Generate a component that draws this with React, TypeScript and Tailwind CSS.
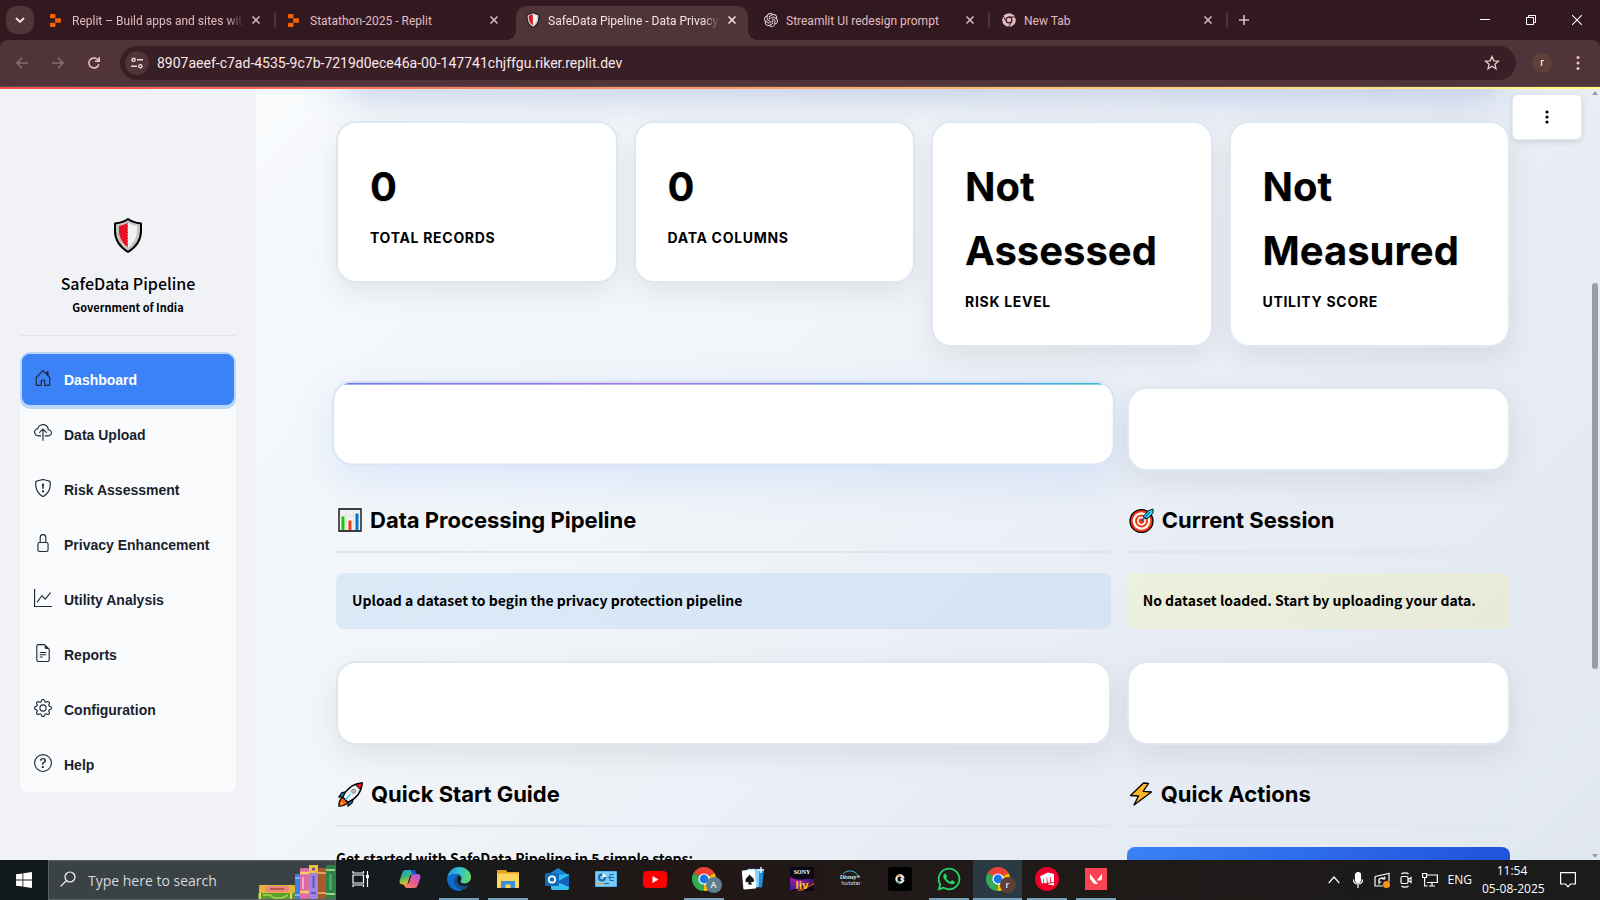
import type { ReactNode } from "react";
import {
  BsHouseDoor,
  BsCloudUpload,
  BsShieldExclamation,
  BsLock,
  BsGraphUp,
  BsFileEarmarkText,
  BsGear,
  BsQuestionCircle,
} from "react-icons/bs";
import { SiOpenai, SiRiotgames, SiValorant } from "react-icons/si";
import { FaWhatsapp } from "react-icons/fa";

const ui = "font-['Segoe_UI','Open_Sans','Noto_Sans',sans-serif]";
const chrome = "font-['Segoe_UI','Roboto',sans-serif]";
const source = "font-['Noto_Sans_CJK_SC','Open_Sans',sans-serif] font-bold";
const inter = "font-['Inter',sans-serif]";

/* ---------- small drawings ---------- */

function Shield({ className }: { className: string }) {
  return (
    <svg viewBox="0 0 28 35" className={className} aria-hidden="true">
      <path d="M14 1C10 4 5 5 1 5.5V13c0 9 5 16 13 21 8-5 13-12 13-21V5.500C23 5 18 4 14 1Z" fill="#c6c6c6" stroke="#000" strokeWidth="2" strokeLinejoin="round" />
      <path d="M14 5C11 6 8 7.500 5 7.800V13c0 7 4 12.500 9 16.500Z" fill="#e81224" />
      <path d="M14 5c3 1 6 2.500 9 2.800V13c0 7-4 12.500-9 16.500Z" fill="#f2f2f2" />
      <path d="M14.500 6v23" stroke="#f2f2f2" strokeWidth="2" strokeDasharray="1.500 1.500" />
    </svg>
  );
}

function Replit() {
  return (
    <svg viewBox="0 0 12 14" className="h-[13px] w-[11px]" fill="#f26207" aria-hidden="true">
      <rect x="0" y="0" width="6" height="4.600" rx="1" />
      <rect x="5.500" y="4.600" width="6.500" height="4.800" rx="1" />
      <rect x="0" y="9.400" width="6" height="4.600" rx="1" />
    </svg>
  );
}

function ChromeMono() {
  return (
    <svg viewBox="0 0 16 16" className="size-3.5" aria-hidden="true">
      <circle cx="8" cy="8" r="7.800" fill="#e3b9c3" />
      <circle cx="8" cy="8" r="4" fill="#31191f" />
      <circle cx="8" cy="8" r="2.700" fill="#e3b9c3" />
      <path d="M8 4.600h7.200M5 9.700 1.500 3.600M11 9.800 7.600 15.700" stroke="#31191f" strokeWidth="1.100" />
    </svg>
  );
}

function ChromeColor({ letter, badge }: { letter: string; badge: string }) {
  return (
    <span className="relative">
      <svg viewBox="0 0 24 24" className="size-6" aria-hidden="true">
        <path d="M12 12 1.600 6A12 12 0 0 1 22.400 6Z" fill="#ea4335" />
        <path d="M12 12 22.400 6A12 12 0 0 1 12 24Z" fill="#fbbc05" />
        <path d="M12 12v12A12 12 0 0 1 1.600 6Z" fill="#34a853" />
        <path d="M12 6h10.400L12 12Z" fill="#ea4335" />
        <path d="M17.200 15 12 24V12Z" fill="#fbbc05" />
        <path d="M6.800 15 1.600 6 12 12Z" fill="#34a853" />
        <circle cx="12" cy="12" r="5.600" fill="#fff" />
        <circle cx="12" cy="12" r="4.400" fill="#1a73e8" />
      </svg>
      <span className={`absolute -right-1.5 -bottom-0.5 flex size-4 items-center justify-center rounded-full text-[9px] font-semibold text-[#e6eaec] ${badge}`}>
        {letter}
      </span>
    </span>
  );
}

function Cross({ className = "" }: { className?: string }) {
  return (
    <svg viewBox="0 0 8 8" className={`size-2 ${className}`} aria-hidden="true">
      <path d="m.5.5 7 7m0-7-7 7" stroke="currentColor" strokeWidth="1.500" fill="none" />
    </svg>
  );
}

/* ---------- browser frame ---------- */

type TabInfo = { title: string; icon: ReactNode; active?: boolean; divider?: boolean; fade?: boolean };

const tabs: TabInfo[] = [
  { title: "Replit – Build apps and sites with AI", icon: <Replit />, divider: true, fade: true },
  { title: "Statathon-2025 - Replit", icon: <Replit /> },
  { title: "SafeData Pipeline - Data Privacy", icon: <Shield className="h-4 w-3.5" />, active: true, fade: true },
  { title: "Streamlit UI redesign prompt", icon: <SiOpenai className="size-3.5 text-[#e9dcdf]" />, divider: true },
  { title: "New Tab", icon: <ChromeMono />, divider: true },
];

function BrowserTab({ title, icon, active, divider, fade }: TabInfo) {
  return (
    <div className="relative flex h-full w-[238px] min-w-0 items-end">
      {active && (
        <div className="absolute top-1.5 -right-1.5 bottom-0 -left-2 flex items-end">
          <span className="size-2.5 bg-[radial-gradient(circle_at_0_0,#31191f_10px,#50343a_10px)]" />
          <span className="h-full flex-1 rounded-t-[10px] bg-[#50343a]" />
          <span className="size-2.5 bg-[radial-gradient(circle_at_100%_0,#31191f_10px,#50343a_10px)]" />
        </div>
      )}
      <div className="relative flex h-full w-full items-center pl-3">
        <button className="flex min-w-0 flex-1 items-center text-left">
          <span className="flex w-[22px] shrink-0 items-center">{icon}</span>
          <span
            className={`mt-0.5 flex-1 overflow-hidden whitespace-nowrap text-[12px] leading-4 ${active ? "text-[#f3e3e7]" : "text-[#e3b9c3]"} ${fade ? "[mask-image:linear-gradient(90deg,#000_90%,transparent)]" : ""}`}
          >
            {title}
          </span>
        </button>
        <button aria-label={`Close ${title}`} className={`mr-2 flex w-6 items-center justify-center ${active ? "text-[#f3e3e7]" : "text-[#e3b9c3]"}`}>
          <Cross />
        </button>
      </div>
      {divider && <span className="absolute top-3 right-0 h-4 w-0.5 rounded bg-[#50343a]" />}
    </div>
  );
}

function TabStrip() {
  return (
    <div className={`flex h-10 items-center bg-[#31191f] ${chrome}`}>
      <button aria-label="Search tabs" className="mr-1 ml-1.5 flex size-7 items-center justify-center rounded-[10px] bg-[#50343a]">
        <svg viewBox="0 0 10 6" className="h-1.5 w-2.5" aria-hidden="true">
          <path d="m1 1 4 4 4-4" stroke="#f3e3e7" strokeWidth="1.800" fill="none" />
        </svg>
      </button>
      <div className="flex h-full">
        {tabs.map((t) => (
          <BrowserTab key={t.title} {...t} />
        ))}
      </div>
      <button aria-label="New tab" className="flex w-8 items-center justify-center">
        <svg viewBox="0 0 10 10" className="size-2.5" aria-hidden="true">
          <path d="M5 0v10M0 5h10" stroke="#e3b9c3" strokeWidth="1.600" />
        </svg>
      </button>
      <div className="ml-auto flex h-full text-white">
        <button aria-label="Minimise" className="flex w-[46px] items-center justify-center">
          <svg viewBox="0 0 10 10" className="size-2.5"><path d="M0 4.500h10" stroke="currentColor" /></svg>
        </button>
        <button aria-label="Restore" className="flex w-[46px] items-center justify-center">
          <svg viewBox="0 0 10 10" className="size-2.5" fill="none" stroke="currentColor"><path d="M.5 2.500h7v7h-7zM2.500 2.500v-2h7v7h-2" /></svg>
        </button>
        <button aria-label="Close window" className="flex w-[46px] items-center justify-center">
          <svg viewBox="0 0 10 10" className="size-2.5"><path d="m0 0 10 10M10 0 0 10" stroke="currentColor" strokeWidth="1.100" /></svg>
        </button>
      </div>
    </div>
  );
}

function Toolbar() {
  return (
    <div className={`bg-[#31191f] ${chrome}`}>
      <div className="flex h-[47px] items-center rounded-t-lg border-b border-[#5a4a50] bg-[#50343a] pr-1 pl-1">
        <div className="flex">
          <button aria-label="Back" className="flex w-9 justify-center text-[#8b6a72]">
            <svg viewBox="0 0 12 12" className="size-3" fill="none" stroke="currentColor" strokeWidth="1.500"><path d="M12 6H1M6 .7.900 6 6 11.300" /></svg>
          </button>
          <button aria-label="Forward" className="flex w-9 justify-center text-[#8b6a72]">
            <svg viewBox="0 0 12 12" className="size-3" fill="none" stroke="currentColor" strokeWidth="1.500"><path d="M0 6h11M6 .7 11.100 6 6 11.300" /></svg>
          </button>
          <button aria-label="Reload" className="flex w-9 justify-center text-[#f0c4ce]">
            <svg viewBox="0 0 12 12" className="size-3" fill="none" stroke="currentColor" strokeWidth="1.500"><path d="M10.800 7.200A5 5 0 1 1 9.700 2.600L11 4M11.200 0v4.300H7" /></svg>
          </button>
        </div>
        <div className="ml-2 flex h-[34px] flex-1 items-center rounded-full bg-[#381f25] pr-4 pl-[5px]">
          <button aria-label="Site information" className="flex size-6 items-center justify-center rounded-full bg-[#50343a]">
            <svg viewBox="0 0 12 12" className="size-3" fill="none" stroke="#f0d4da" strokeWidth="1.400">
              <circle cx="2.600" cy="2.800" r="1.600" /><path d="M6 2.800h6M0 9.200h6" /><circle cx="9.400" cy="9.200" r="1.600" />
            </svg>
          </button>
          <input
            aria-label="Address"
            defaultValue="8907aeef-c7ad-4535-9c7b-7219d0ece46a-00-147741chjffgu.riker.replit.dev"
            className="ml-2 h-6 flex-1 bg-transparent text-[14px] text-[#fbe6ea] outline-none"
          />
          <button aria-label="Bookmark">
            <svg viewBox="0 0 16 16" className="size-4" fill="none" stroke="#f0c4ce" strokeWidth="1.300"><path d="m8 1.500 1.800 4.300 4.700.4-3.600 3 1.100 4.600L8 11.300l-4 2.500 1.100-4.600-3.600-3 4.700-.4Z" /></svg>
          </button>
        </div>
        <button aria-label="Profile" className="ml-4 flex size-5 items-center justify-center rounded-full bg-[#5e4238] text-[11px] leading-3 text-white">r</button>
        <button aria-label="Browser menu" className="ml-2 flex w-9 justify-center text-[#f0c4ce]">
          <svg viewBox="0 0 4 14" className="h-3.5 w-1" fill="currentColor"><circle cx="2" cy="1.500" r="1.500" /><circle cx="2" cy="7" r="1.500" /><circle cx="2" cy="12.500" r="1.500" /></svg>
        </button>
      </div>
    </div>
  );
}

/* ---------- sidebar ---------- */

const menu = [
  { label: "Dashboard", Icon: BsHouseDoor },
  { label: "Data Upload", Icon: BsCloudUpload },
  { label: "Risk Assessment", Icon: BsShieldExclamation },
  { label: "Privacy Enhancement", Icon: BsLock },
  { label: "Utility Analysis", Icon: BsGraphUp },
  { label: "Reports", Icon: BsFileEarmarkText },
  { label: "Configuration", Icon: BsGear },
  { label: "Help", Icon: BsQuestionCircle },
];

function Sidebar() {
  return (
    <aside className="w-64 shrink-0 bg-[#f0f2f6] px-5 pt-[131px]">
      <div className={`flex flex-col items-center text-black ${source}`}>
        <Shield className="h-[35px] w-7" />
        <h2 className="mt-[19px] text-[16px] leading-[22px] font-medium">SafeData Pipeline</h2>
        <p className="mt-1 text-[11px] leading-[18px]">Government of India</p>
      </div>
      <hr className="mt-[19px] border-[#e1e4ea]" />
      <nav className="mt-4 rounded-lg bg-[#f9fbfd] font-['Liberation_Sans',Arial,sans-serif]">
        <ul>
          {menu.map(({ label, Icon }, i) => (
            <li key={label} className="h-[55px] p-0.5">
              <a
                href="#"
                className={`flex h-[51px] items-center rounded-lg pl-3 text-[14px] font-bold ${i === 0 ? "bg-[#3b82f6] text-white shadow-[0_0_0_2px_#bcd6fc,0_2px_0_2px_#bcd6fc]" : "text-[#1a1f2e]"}`}
              >
                <Icon className="mb-1 size-[18px] text-[#1e293b]" />
                <span className="mt-0.5 ml-3">{label}</span>
              </a>
            </li>
          ))}
        </ul>
      </nav>
    </aside>
  );
}

/* ---------- dashboard ---------- */

const stats = [
  { value: "0", label: "Total Records" },
  { value: "0", label: "Data Columns" },
  { value: "Not Assessed", label: "Risk Level" },
  { value: "Not Measured", label: "Utility Score" },
];

const cardFrame = "rounded-[20px] border-2 border-[#dfe7f1] bg-white shadow-[0_10px_30px_rgba(0,0,0,0.08)]";

function ChartEmoji() {
  return (
    <svg viewBox="0 0 24 24" className="size-6" aria-hidden="true">
      <path d="M1 1h22v22H1z" fill="#f2f2f2" stroke="#000" strokeWidth="1.300" />
      <path d="M2 8h20M2 14h20M8.500 2v20M15.500 2v20" stroke="#ddd" strokeWidth=".7" />
      <path d="M3.500 8.500h3V22h-3z" fill="#16c60c" /><path d="M10.500 12.500h3V22h-3z" fill="#f03a17" /><path d="M17.500 5.500h3V22h-3z" fill="#0078d7" />
    </svg>
  );
}

function TargetEmoji() {
  return (
    <svg viewBox="0 0 24 24" className="size-[25px]" aria-hidden="true">
      <circle cx="12" cy="12.500" r="11" fill="#f03a17" stroke="#000" strokeWidth="1.300" />
      <circle cx="12" cy="12.500" r="7.300" fill="none" stroke="#fff" strokeWidth="2.200" />
      <circle cx="12" cy="12.500" r="3.500" fill="#f03a17" stroke="#fff" strokeWidth="1.600" />
      <path d="m14 7.500 4.500-4.800L23 1l.2 3.500L19 9.500l-4.500.8Z" fill="#31d2f7" stroke="#000" strokeWidth=".9" strokeLinejoin="round" />
      <path d="m12 12.500 8-8.500" stroke="#0063b1" strokeWidth="1.100" />
    </svg>
  );
}

function RocketEmoji() {
  return (
    <svg viewBox="0 0 24 24" className="size-[25px]" aria-hidden="true" stroke="#000" strokeLinejoin="round">
      <path d="m9 9-5.500 1.500L.800 14.500l5-.5ZM15 15l-1.500 5-4 3.200.500-5Z" fill="#00a4ef" strokeWidth="1.200" />
      <path d="M4.500 14.500C2 16.500.800 19.500.800 23.200c3.700 0 6.700-1.200 8.700-3.700Z" fill="#f7630c" strokeWidth="1.200" />
      <path d="M3.500 19 2.500 21.500 5 20.500Z" fill="#fff100" stroke="none" />
      <path d="M4.500 14.500C8 6.500 14 1.500 23.300.8 22.500 10 17.500 16 9.500 19.500Z" fill="#f2f2f2" strokeWidth="1.300" />
      <path d="M16.500 2.500 23.300.8 21.500 7.500Z" fill="#e81224" strokeWidth=".9" />
      <circle cx="15" cy="8.800" r="2" fill="#bbb" stroke="#777" strokeWidth=".8" />
      <path d="m7 17 5-5.200" stroke="#31d2f7" strokeWidth="1.200" />
    </svg>
  );
}

function BoltEmoji() {
  return (
    <svg viewBox="0 0 24 24" className="size-6" aria-hidden="true">
      <path d="m14.500 1-13 12.500 8 .5L5 23l17.500-13-8.300-.7L19.500 1.500Z" fill="#fcb827" stroke="#000" strokeWidth="1.300" strokeLinejoin="round" />
    </svg>
  );
}

function SectionTitle({ icon, children }: { icon: ReactNode; children: ReactNode }) {
  return (
    <div className="mt-7 mb-5 flex h-[54px] items-start border-b-2 border-[#dfe6ee] pl-0.5">
      <span className="flex h-[42px] items-center">{icon}</span>
      <h2 className={`ml-2 text-[22px] leading-[42px] font-bold text-black ${inter}`}>{children}</h2>
    </div>
  );
}

function Dashboard() {
  return (
    <main className="min-w-0 flex-1 overflow-hidden px-20">
      <div className="-mt-16 h-16 rounded-3xl shadow-[0_16px_40px_-8px_rgba(80,110,190,0.34)]" />
      <div className="relative mt-[34px] grid grid-cols-4 items-start gap-4">
        {stats.map((s) => (
          <section key={s.label} className={`p-8 ${cardFrame} ${inter}`}>
            <p className="text-[40px] leading-[64px] font-bold text-black [text-shadow:0_1px_2px_rgba(0,0,0,0.15)]">{s.value}</p>
            <h3 className="mt-2 text-[14px] leading-[22px] font-bold tracking-wider text-black uppercase">{s.label}</h3>
          </section>
        ))}
      </div>
      <div className="mt-10 flex gap-4">
        <div className="grow basis-[calc(66.667%-8px)]">
          <div className="h-[84px] -translate-y-1.5 scale-[1.01] overflow-hidden rounded-[20px] border-2 border-[#d9e5f5] bg-white shadow-[0_14px_44px_rgba(59,130,246,0.14)]">
            <div className="h-0.5 bg-[linear-gradient(90deg,#667eea,#a678ea_38%,#6a98ea_72%,#3fb6da)]" />
          </div>
          <SectionTitle icon={<ChartEmoji />}>Data Processing Pipeline</SectionTitle>
          <p className={`h-14 rounded-lg bg-[linear-gradient(135deg,#dceaf8,#d5e3f3)] px-4 pt-[15px] text-[14px] leading-6 text-black ${source}`}>
            Upload a dataset to begin the privacy protection pipeline
          </p>
          <div className={`mt-8 h-[84px] ${cardFrame}`} />
          <SectionTitle icon={<RocketEmoji />}>Quick Start Guide</SectionTitle>
          <p className={`text-[14px] leading-[22px] text-black ${source}`}>Get started with SafeData Pipeline in 5 simple steps:</p>
        </div>
        <div className="relative grow basis-[calc(33.333%-8px)]">
          <div className={`h-[84px] ${cardFrame}`} />
          <SectionTitle icon={<TargetEmoji />}>Current Session</SectionTitle>
          <p className={`h-14 rounded-lg bg-[linear-gradient(135deg,#edf0dd,#e7eada)] px-4 pt-[15px] text-[14px] leading-6 whitespace-nowrap text-black ${source}`}>
            No dataset loaded. Start by uploading your data.
          </p>
          <div className={`mt-8 h-[84px] ${cardFrame}`} />
          <SectionTitle icon={<BoltEmoji />}>Quick Actions</SectionTitle>
          <button aria-label="Upload data" className="block h-12 w-full rounded-lg bg-[linear-gradient(135deg,#3b82f6,#1d4ed8)]" />
        </div>
      </div>
    </main>
  );
}

function ScrollTrack() {
  return (
    <div className="flex w-2.5 flex-col items-center pt-1 pb-0.5" aria-hidden="true">
      <svg viewBox="0 0 6 4" className="h-1 w-1.5"><path d="M0 4 3 0l3 4Z" fill="#9a9da8" /></svg>
      <span className="mt-[188px] h-[386px] w-1.5 rounded-full bg-[#9a9da8]" />
      <svg viewBox="0 0 6 4" className="mt-auto h-1 w-1.5"><path d="m0 0 3 4 3-4Z" fill="#9a9da8" /></svg>
    </div>
  );
}

/* ---------- taskbar ---------- */

function Books() {
  return (
    <svg viewBox="0 0 78 34" className="h-[34px] w-[78px] shrink-0" aria-hidden="true">
      <rect x="2" y="20" width="36" height="8" rx="1" fill="#e8b33c" /><rect x="8" y="21" width="24" height="6" rx="3" fill="#e98a7a" /><rect x="13" y="23" width="14" height="2" fill="#b85a50" />
      <rect x="1" y="28" width="37" height="6" rx="1" fill="#5a9e2f" /><path d="M6 30h7l4 3h8l6-3" stroke="#a8d34a" strokeWidth="1.500" fill="none" /><path d="M3 28v6M34 28v6" stroke="#f2cf52" strokeWidth="2" />
      <rect x="38" y="9" width="5" height="25" fill="#3f7fe0" /><path d="M38 13h5M38 30h5" stroke="#9cc4ff" strokeWidth="1.500" />
      <rect x="43" y="3" width="9" height="31" rx="1" fill="#dd6ba8" /><path d="M43 8h9M43 27h9" stroke="#f7d06a" strokeWidth="2.500" /><path d="M46 12v12" stroke="#f5a8cf" strokeWidth="2" />
      <rect x="52" y="0" width="9" height="34" rx="1" fill="#9d86dd" /><rect x="52" y="0" width="9" height="8" fill="#f0bf3f" /><circle cx="56.500" cy="4" r="1.500" fill="#5a3fa8" /><path d="M56.500 11v12M54 28h5" stroke="#6b50bb" strokeWidth="2" />
      <rect x="61" y="3" width="8" height="31" rx="1" fill="#a85a2c" /><path d="M61 8h8M61 28h8" stroke="#e0a15a" strokeWidth="2" />
      <rect x="69" y="0" width="9" height="34" rx="1" fill="#2f8048" /><path d="M69 5h9M69 29h9" stroke="#9bd08a" strokeWidth="2" /><path d="M73.500 9v16" stroke="#4ba566" strokeWidth="3" />
    </svg>
  );
}

const apps: { name: string; art: ReactNode; open?: boolean; current?: boolean }[] = [
  {
    name: "Task View",
    art: (
      <svg viewBox="0 0 18 16" className="h-4 w-[18px]" fill="none" stroke="#fff" strokeWidth="1.200">
        <path d="M1 4h10.500v8H1zM1 0v2h10.500V0M1 16v-2h10.500v2M15.500 0v16" /><rect x="14" y="4" width="3" height="3" fill="#fff" stroke="none" />
      </svg>
    ),
  },
  {
    name: "Copilot",
    art: (
      <svg viewBox="0 0 24 22" className="h-5 w-[22px]">
        <defs>
          <linearGradient id="cpA" x1="0" y1="0" x2="0.300" y2="1"><stop offset="0" stopColor="#1b9ef0" /><stop offset=".5" stopColor="#3bb273" /><stop offset="1" stopColor="#e9c52c" /></linearGradient>
          <linearGradient id="cpB" x1="1" y1="0" x2="0" y2="1"><stop offset="0" stopColor="#a559e8" /><stop offset=".55" stopColor="#ee5b8c" /><stop offset="1" stopColor="#f99a4a" /></linearGradient>
        </defs>
        <path d="M7 1h8c2 0 3 1 3.500 3l.5 2h-4c-2 0-3 1-3.500 3l-1.500 5c-.5 2-1.500 3-3.500 3H3.500C1 17 0 15 .7 12.500L3.500 4C4.200 2 5 1 7 1Z" fill="url(#cpA)" />
        <path d="M17 21H9c-2 0-3-1-3.500-3L5 16.500h3c2 0 3-1 3.500-3L13 8.500c.5-2 1.500-3 3.500-3h4c2.500 0 3.500 2 2.800 4.500L20.500 18c-.7 2-1.500 3-3.500 3Z" fill="url(#cpB)" />
        <path d="M12 1h3c2 0 3 1 3.500 3l.5 1.800h-4C13.500 4 13.500 2 12 1Z" fill="#1b50c8" />
      </svg>
    ),
  },
  {
    name: "Edge",
    open: true,
    art: (
      <svg viewBox="0 0 24 24" className="size-6">
        <defs>
          <linearGradient id="edA" x1="0" y1=".3" x2="1" y2=".4"><stop offset="0" stopColor="#1a9be0" /><stop offset=".6" stopColor="#36c6c8" /><stop offset="1" stopColor="#66dc5a" /></linearGradient>
        </defs>
        <path d="M.2 11C1 4.500 6 0 12 0c7 0 12 4.800 12 10 0 4-3 6.500-6.500 6.500-2.500 0-4-1-4-2 0-.8 1-1.500 1-3C14.500 9 12 7 8.500 7 4.500 7 1.500 9 .2 11Z" fill="url(#edA)" />
        <path d="M.2 11C1.500 9 4.500 7 8.500 7c1.500 0 3 .4 4 1-3 .5-5 3-5 6 0 4.500 3.500 8 8 8.500C14.500 23.500 13 24 12 24 5 24-.600 18 .2 11Z" fill="#0c6cd0" />
        <path d="M7.500 14c0-3 2-5.500 5-6-1.500 1.500-2.500 3-2.500 5 0 4 3.500 6 7.500 6 2 0 3.500-.5 4.500-1-1.500 2.500-4 4.500-6.500 4.500-4.500-.5-8-4-8-8.500Z" fill="#12508f" />
      </svg>
    ),
  },
  {
    name: "File Explorer",
    open: true,
    art: (
      <svg viewBox="0 0 22 18" className="h-[18px] w-[22px]">
        <path d="M0 0h9l1.500 2H22v16H0Z" fill="#e5a21a" /><path d="M0 3.500h22V18H0Z" fill="#ffd65c" /><path d="M4 11h14v7h-4.500v-3.500h-5V18H4Z" fill="#3a8fd8" />
      </svg>
    ),
  },
  {
    name: "Outlook",
    art: (
      <svg viewBox="0 0 24 22" className="h-[22px] w-6">
        <path d="M4 6 13 0l9 6v8H4Z" fill="#1a86d8" /><path d="M6 8 24 6v14c0 1.500-.5 2-2 2H8c-1.500 0-2-.5-2-2Z" fill="#35c0f2" /><path d="M24 7v12L12 14Z" fill="#1463b8" /><rect x="0" y="5" width="14" height="13" rx="1.500" fill="#0f6cbd" /><circle cx="7" cy="11.500" r="3.200" fill="none" stroke="#fff" strokeWidth="1.800" />
      </svg>
    ),
  },
  {
    name: "System Monitor",
    art: (
      <svg viewBox="0 0 22 16" className="h-4 w-[22px]">
        <rect width="22" height="16" rx="1" fill="#4fb4ee" /><rect x="1" y="1" width="20" height="14" fill="#7accf8" /><circle cx="7" cy="6.500" r="3" fill="none" stroke="#1769aa" strokeWidth="2" /><path d="M7.500 6V2.500A3.500 3.500 0 0 1 11 6Z" fill="#fff" /><path d="M12.500 6.500h2.500V3.500h4M15 6.500v3h4M15 6.500h4" stroke="#1769aa" fill="none" /><path d="M9 12.500h5" stroke="#1769aa" /><path d="M3 12.500h5" stroke="#f59d2a" strokeWidth="1.300" />
      </svg>
    ),
  },
  {
    name: "YouTube",
    art: (
      <svg viewBox="0 0 24 17" className="h-[17px] w-6"><rect width="24" height="17" rx="4" fill="#f00" /><path d="m9.500 5 6 3.500-6 3.500Z" fill="#fff" /></svg>
    ),
  },
  { name: "Chrome A", open: true, art: <ChromeColor letter="A" badge="bg-[#607d8b]" /> },
  {
    name: "Solitaire",
    art: (
      <svg viewBox="0 0 24 24" className="size-6">
        <rect x="10" y="2" width="12" height="18" rx="1" fill="#1e8fe0" transform="rotate(6 16 11)" /><rect x="6" y="2" width="12" height="18" rx="1" fill="#8fd0f7" transform="rotate(2 12 11)" /><rect x="1.500" y="3" width="13" height="19" rx="1" fill="#fff" transform="rotate(-5 8 12)" />
        <path d="M8.500 7.500c-1.500 2.500-4 3.500-4 6 0 2 2.300 2.500 3.500 1l-1 3h4l-1.200-3c1.500 1.200 3.500.5 3.300-1.500-.3-2.300-3-3.200-4.600-5.500Z" fill="#111" /><path d="M20 0v6M17 3h6" stroke="#fff" strokeWidth="1.400" />
      </svg>
    ),
  },
  {
    name: "Sony LIV",
    art: (
      <svg viewBox="0 0 24 24" className="size-6">
        <defs><linearGradient id="liv" x1="0" y1="1" x2="1" y2="0"><stop offset="0" stopColor="#3b1fb0" /><stop offset=".5" stopColor="#c321c8" /><stop offset="1" stopColor="#14146a" /></linearGradient></defs>
        <rect width="24" height="24" fill="#0a0716" /><path d="M0 10c8 5 16 1 24 2v3C16 18 10 20 0 24Z" fill="url(#liv)" opacity=".8" /><path d="M6 24c6-5 12-4 18-9v3c-5 2-8 3-11 6Z" fill="#e8541c" opacity=".7" />
        <text x="12" y="7" textAnchor="middle" fontSize="6" fontWeight="700" fill="#fff" fontFamily="Liberation Serif">SONY</text>
        <text x="12" y="22" textAnchor="middle" fontSize="11" fontWeight="700" fill="#ffc629" fontFamily="Open Sans">liv</text>
      </svg>
    ),
  },
  {
    name: "Hotstar",
    art: (
      <svg viewBox="0 0 24 20" className="h-5 w-6">
        <path d="M4 5C8 0 18 1 20 9" fill="none" stroke="#3fc0e8" strokeWidth="1" />
        <text x="11" y="10" textAnchor="middle" fontSize="6" fontStyle="italic" fontWeight="700" fill="#e9eef2" fontFamily="Liberation Serif">Disney+</text>
        <text x="12" y="16" textAnchor="middle" fontSize="6" fill="#d8dde2" fontFamily="Roboto">hotstar</text>
      </svg>
    ),
  },
  {
    name: "CricHD",
    art: (
      <svg viewBox="0 0 24 24" className="size-6">
        <rect width="24" height="24" rx="3" fill="#000" /><circle cx="12" cy="12" r="3.600" fill="none" stroke="#f4f4f4" strokeWidth="2.200" /><path d="M8.500 9.500A4 4 0 0 1 12 8" stroke="#e8872a" strokeWidth="1.500" fill="none" /><path d="M8.500 14.500A4 4 0 0 0 12 16" stroke="#3aa856" strokeWidth="1.500" fill="none" /><path d="M13 12h5" stroke="#000" strokeWidth="1.500" /><circle cx="14" cy="12" r="1.800" fill="#ddd" />
      </svg>
    ),
  },
  { name: "WhatsApp", open: true, art: <FaWhatsapp className="size-[26px] text-[#25d366]" /> },
  { name: "Chrome r", open: true, current: true, art: <ChromeColor letter="r" badge="bg-[#5d4037]" /> },
  {
    name: "Riot Client",
    open: true,
    art: (
      <span className="flex size-6 items-center justify-center rounded-full bg-[#eb0029]"><SiRiotgames className="size-3.5 text-white" /></span>
    ),
  },
  {
    name: "Valorant",
    open: true,
    art: (
      <span className="flex size-[22px] items-center justify-center bg-[#fa4454]"><SiValorant className="size-3 text-white" /></span>
    ),
  },
];

function Tray() {
  const line = { fill: "none", stroke: "#fff", strokeWidth: 1.2 };
  return (
    <div className="ml-auto flex items-center text-white">
      <button aria-label="Show hidden icons" className="flex w-6 justify-center"><svg viewBox="0 0 12 8" className="h-2 w-3" {...line}><path d="m.7 7 5.300-6 5.300 6" /></svg></button>
      <button aria-label="Microphone" className="flex w-6 justify-center"><svg viewBox="0 0 12 16" className="h-4 w-3" {...line}><rect x="3.500" y=".6" width="5" height="10" rx="2.500" fill="#fff" /><path d="M1.500 7.500c0 6 9 6 9 0M6 12v4" /></svg></button>
      <button aria-label="Sync" className="flex w-6 justify-center"><svg viewBox="0 0 16 16" className="size-4" {...line}><path d="M1 4.500 15 1.500v8M1 4.500V14h8M5 10a3.200 3.200 0 0 1 5.500-3M10.700 4.500V7H8M5 12.500V10h2.500" /><circle cx="12.500" cy="12.500" r="3.500" fill="#f7941d" stroke="none" /></svg></button>
      <button aria-label="Meet now" className="flex w-6 justify-center"><svg viewBox="0 0 14 16" className="h-4 w-3.5" {...line}><rect x="2" y="4.500" width="7" height="7" rx="1.500" /><path d="m9 7.500 3-2v5l-3-2M2.500 2C4 .500 8 .500 9.500 2M2.500 14c1.500 1.500 5.500 1.500 7 0" /></svg></button>
      <button aria-label="Network" className="flex w-6 justify-center"><svg viewBox="0 0 16 16" className="size-4" {...line}><path d="M5 3h10.400v7.500H5M10 10.500V14M7 14h6M.6 1.500h4v4h-4zM2.600 5.500V14h3" /></svg></button>
      <span className="ml-1.5 text-[12px] leading-4">ENG</span>
      <div className="ml-2.5 w-[60px] text-center text-[12px] leading-[18px] whitespace-nowrap">
        <p>11:54</p>
        <p>05-08-2025</p>
      </div>
      <button aria-label="Notifications" className="mr-3 ml-1.5 flex w-10 justify-center"><svg viewBox="0 0 16 16" className="size-4" {...line}><path d="M.6.6h14.800V12h-5L8 14.800 5.600 12h-5Z" /></svg></button>
    </div>
  );
}

function Taskbar() {
  return (
    <footer className="flex h-10 shrink-0 bg-[linear-gradient(90deg,#10181c,#151b1e_25%,#211816_42%,#1f1a18_65%,#1b1b1b)]">
      <button aria-label="Start" className="flex w-12 items-center justify-center">
        <svg viewBox="0 0 16 16" className="size-4" fill="#fff"><path d="m0 2.300 6.500-.9v6.200H0ZM7.300 1.300 16 0v7.600H7.300ZM0 8.400h6.500v6.200L0 13.700ZM7.300 8.400H16V16l-8.700-1.300Z" /></svg>
      </button>
      <label className="flex w-72 items-end border border-[#5c6468] bg-[#3b4246]">
        <svg viewBox="0 0 16 16" className="mb-3 ml-[11px] size-4 shrink-0" fill="none" stroke="#fff" strokeWidth="1.200"><circle cx="10" cy="6" r="5" /><path d="M6.400 9.600.6 15.400" /></svg>
        <input type="text" aria-label="Search" placeholder="Type here to search" className="mb-1.5 ml-3 min-w-0 flex-1 bg-transparent text-[14px] leading-6 text-white outline-none placeholder:text-[#d5d9da]" />
        <Books />
      </label>
      {apps.map((a) => (
        <button key={a.name} aria-label={a.name} className={`flex w-[49px] flex-col items-center ${a.current ? "bg-[#2b3a42]" : ""}`}>
          <span className="flex flex-1 items-center">{a.art}</span>
          <span className={`h-0.5 ${a.current ? "w-full" : "w-10"} ${a.open ? "bg-[#76a2bf]" : ""}`} />
        </button>
      ))}
      <Tray />
    </footer>
  );
}

export default function App() {
  return (
    <div className={`flex h-screen flex-col overflow-hidden ${ui}`}>
      <TabStrip />
      <Toolbar />
      <div className="relative flex min-h-0 flex-1 overflow-hidden bg-[linear-gradient(135deg,#f8fafc_10%,#f1f5f9_45%,#e8edf5_70%,#e2e8f0)]">
        <Sidebar />
        <Dashboard />
        <ScrollTrack />
        <div className="absolute inset-x-0 top-0 h-0.5 bg-[linear-gradient(90deg,#ff4b4b,#fffd80)]" />
        <button aria-label="Page options" className="absolute top-[7px] right-[18px] flex h-[46px] w-[70px] items-center justify-center rounded-md border border-[#e2e8f0] bg-white shadow-[0_2px_6px_rgba(0,0,0,0.12)]">
          <svg viewBox="0 0 4 14" className="h-3.5 w-1"><circle cx="2" cy="2" r="1.600" /><circle cx="2" cy="7" r="1.600" /><circle cx="2" cy="12" r="1.600" /></svg>
        </button>
      </div>
      <Taskbar />
    </div>
  );
}
